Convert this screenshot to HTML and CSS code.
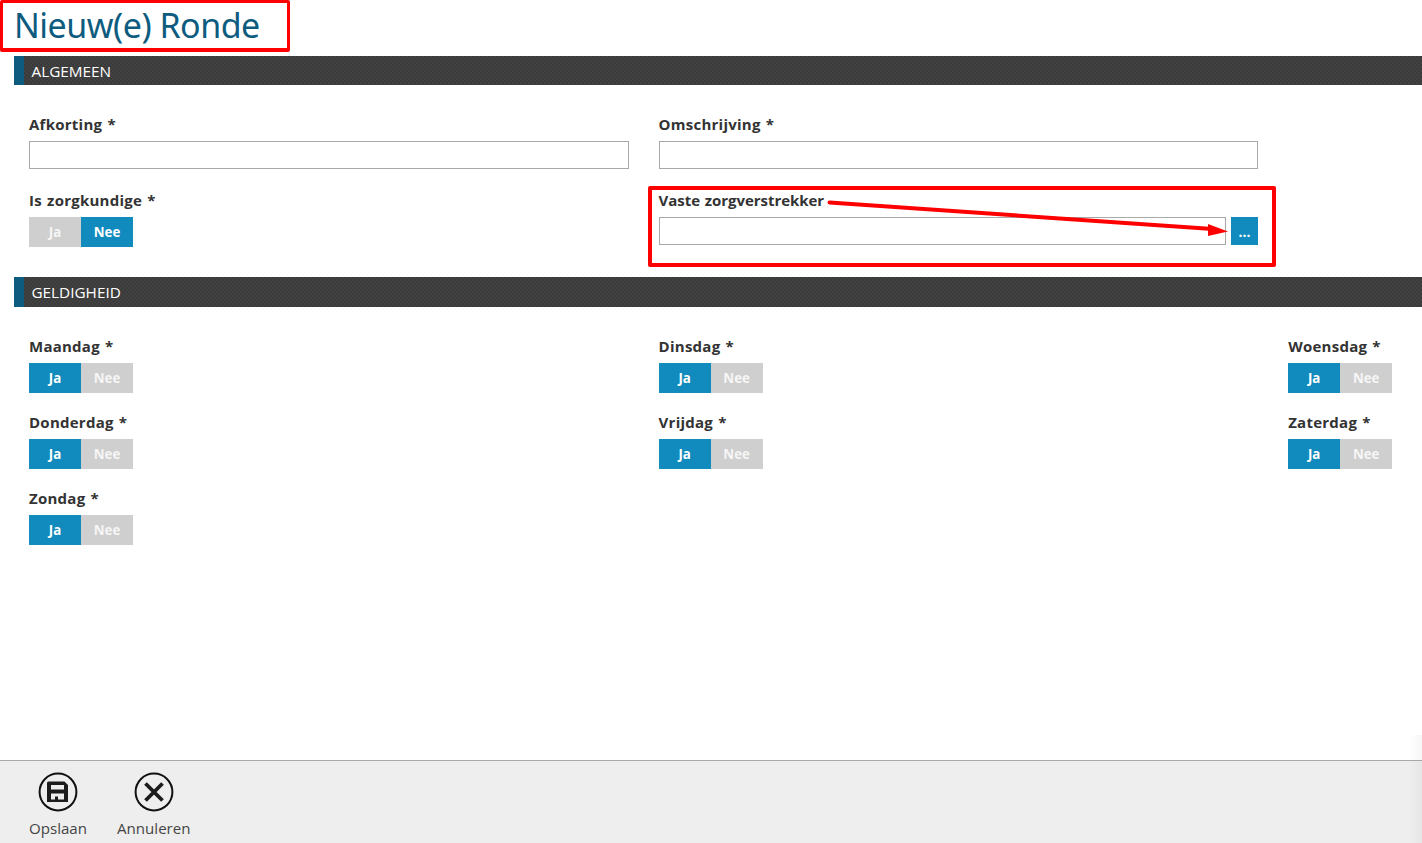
FILE: index.html
```html
<!DOCTYPE html>
<html lang="nl">
<head>
<meta charset="utf-8">
<title>Nieuw(e) Ronde</title>
<link rel="stylesheet" href="styles.css">
</head>
<body>
<div class="page">
  <main class="content">
    <h1 class="title">Nieuw(e) Ronde</h1>
    <section class="section">
      <h2 class="bar">ALGEMEEN</h2>
      <div class="form form-general">
        <div class="field">
          <label class="label">Afkorting *</label>
          <input class="input" type="text">
        </div>
        <div class="field">
          <label class="label">Omschrijving *</label>
          <input class="input" type="text">
        </div>
        <div class="field">
          <label class="label">Is zorgkundige *</label>
          <div class="toggle"><span class="opt">Ja</span><span class="opt on">Nee</span></div>
        </div>
        <div class="field">
          <label class="label label-long">Vaste zorgverstrekker</label>
          <div class="picker">
            <input class="input" type="text">
            <button class="dots" type="button">...</button>
          </div>
        </div>
      </div>
    </section>
    <section class="section">
      <h2 class="bar bar-tall">GELDIGHEID</h2>
      <div class="form form-days">
        <div class="field"><label class="label">Maandag *</label><div class="toggle"><span class="opt on">Ja</span><span class="opt">Nee</span></div></div>
        <div class="field"><label class="label">Dinsdag *</label><div class="toggle"><span class="opt on">Ja</span><span class="opt">Nee</span></div></div>
        <div class="field"><label class="label">Woensdag *</label><div class="toggle"><span class="opt on">Ja</span><span class="opt">Nee</span></div></div>
        <div class="field"><label class="label">Donderdag *</label><div class="toggle"><span class="opt on">Ja</span><span class="opt">Nee</span></div></div>
        <div class="field"><label class="label">Vrijdag *</label><div class="toggle"><span class="opt on">Ja</span><span class="opt">Nee</span></div></div>
        <div class="field"><label class="label">Zaterdag *</label><div class="toggle"><span class="opt on">Ja</span><span class="opt">Nee</span></div></div>
        <div class="field"><label class="label">Zondag *</label><div class="toggle"><span class="opt on">Ja</span><span class="opt">Nee</span></div></div>
      </div>
    </section>
  </main>
  <footer class="footer">
    <button class="action" type="button">
      <svg class="icon" viewBox="0 0 40 40" aria-hidden="true">
        <circle cx="20" cy="20" r="18.400" fill="none" stroke="#111" stroke-width="2"/>
        <path fill="#1c1c1c" fill-rule="evenodd" d="M10.500 9.500H26.500L30 13V30H9V11Q9 9.500 10.500 9.500ZM13 13V17.500H26V13ZM13 21.500V27.500H26V21.500Z"/>
        <rect x="17" y="24.500" width="3" height="3.500" fill="#1c1c1c"/>
      </svg>
      <span>Opslaan</span>
    </button>
    <button class="action" type="button">
      <svg class="icon" viewBox="0 0 40 40" aria-hidden="true">
        <circle cx="20" cy="20" r="18.400" fill="none" stroke="#111" stroke-width="2"/>
        <path d="M11.500 11.500L28.500 28.500M28.500 11.500L11.500 28.500" fill="none" stroke="#1c1c1c" stroke-width="3.800"/>
      </svg>
      <span>Annuleren</span>
    </button>
  </footer>
</div>
<div class="mark mark-title"></div>
<div class="mark mark-field"></div>
<svg class="arrow" viewBox="0 0 1422 843" aria-hidden="true">
  <path d="M829.500 202.500L1209 228.800" fill="none" stroke="#f00" stroke-width="4" stroke-linecap="round"/>
  <path d="M1208 224L1228 231.500L1208 236Z" fill="#f00"/>
</svg>
<div class="edge"></div>
</body>
</html>
```
FILE: styles.css
```css
* { box-sizing: border-box; }
html, body { margin: 0; padding: 0; height: 100%; overflow: hidden; background: #fff; }
body { font-family: "Open Sans", "Noto Sans", "Liberation Sans", sans-serif; color: #333; }
.page { display: flex; flex-direction: column; height: 843px; }
.content { flex: 1; min-height: 0; }
.title {
  margin: 0;
  height: 56px;
  padding: 4px 0 0 14px;
  font-family: "Noto Sans", "Open Sans", sans-serif;
  font-size: 34px;
  font-weight: 400;
  line-height: 42px;
  letter-spacing: -0.5px;
  color: #0d5c7f;
}
.section { margin-left: 14px; }
.bar {
  margin: 0;
  height: 29px;
  padding-left: 7.500px;
  border-left: 10px solid #0d5c7f;
  font-size: 15.300px;
  font-weight: 400;
  line-height: 30px;
  color: #fff;
  background-color: #3d3d3d;
  background-image: repeating-conic-gradient(#424242 0 25%, #3a3a3a 0 50%);
  background-size: 4px 4px;
}
.bar-tall { height: 30px; line-height: 31px; }
.form {
  display: grid;
  padding-left: 15px;
  align-content: start;
}
.form-general {
  grid-template-columns: 629.600px 629.600px;
  padding-top: 28px;
  row-gap: 20px;
  height: 192px;
}
.form-days {
  grid-template-columns: 629.600px 629.600px minmax(0, 1fr);
  padding-top: 28px;
  row-gap: 18px;
}
.field { display: flex; flex-direction: column; min-width: 0; }
.label {
  height: 22px;
  margin-bottom: 6px;
  font-size: 15px;
  font-weight: 700;
  line-height: 22px;
  letter-spacing: 0.25px;
  word-spacing: 1px;
  color: #333;
}
.label-long { letter-spacing: -0.05px; }
.input {
  display: block;
  width: 599.500px;
  height: 28px;
  padding: 0 6px;
  border: 1px solid #a9a9a9;
  background: #fff;
  border-radius: 0;
  outline: 0;
}
.picker { display: flex; width: 599.500px; gap: 5px; }
.picker .input { flex: 1; width: auto; min-width: 0; }
.dots {
  flex: none;
  width: 27px;
  height: 28px;
  padding: 2px 0 0;
  border: 0;
  background: #118bbd;
  color: #fff;
  font: 700 14px/22px "Open Sans", sans-serif;
}
.toggle { display: flex; width: 104px; height: 30px; }
.opt {
  flex: 1;
  background: #cfcfcf;
  color: #f6f6f6;
  font-size: 13.300px;
  font-weight: 700;
  line-height: 30px;
  text-align: center;
}
.opt.on { background: #118bbd; color: #fff; }
.footer {
  display: flex;
  flex: none;
  height: 83px;
  padding: 11px 0 0 29px;
  gap: 30px;
  border-top: 1px solid #aaa;
  background: #eee;
}
.action {
  display: flex;
  flex-direction: column;
  align-items: center;
  padding: 0;
  border: 0;
  background: none;
  color: #444;
  font: 400 15.100px/20px "Open Sans", sans-serif;
}
.icon { width: 40px; height: 40px; margin-bottom: 6px; display: block; }
.mark { position: absolute; border: 4px solid #f00; border-radius: 2px; }
.mark-title { left: 0; top: 0; width: 290px; height: 52px; border-width: 3px 3px 4px; }
.mark-field { left: 648px; top: 186px; width: 628px; height: 81px; }
.arrow { position: absolute; left: 0; top: 0; width: 1422px; height: 843px; pointer-events: none; }
.edge {
  position: absolute;
  right: 0;
  top: 735px;
  width: 12px;
  height: 108px;
  background: linear-gradient(to right, rgba(0,0,0,0), rgba(0,0,0,.035));
}
```
